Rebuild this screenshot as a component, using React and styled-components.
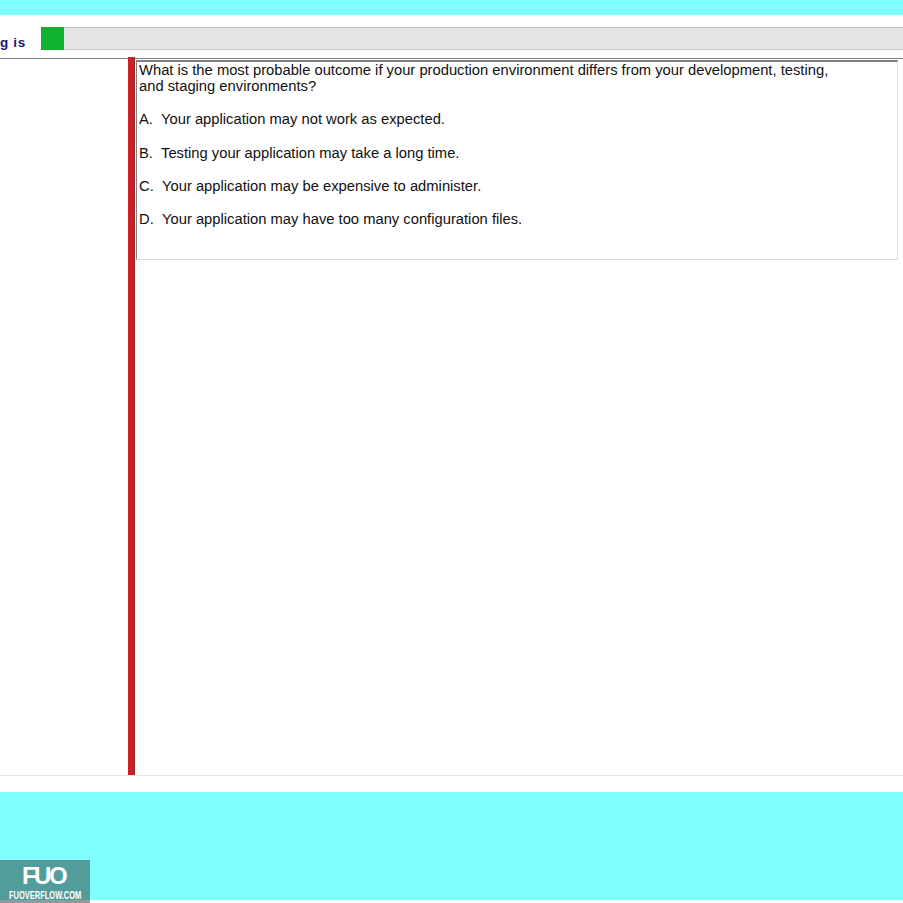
import React from 'react';
import styled, { createGlobalStyle } from 'styled-components';

const Global = createGlobalStyle`
    html, body {
        margin: 0;
        padding: 0;
        background: #fff;
    }
    body {
        font-family: "Liberation Sans", Arial, sans-serif;
    }
`

const Page = styled.div`
    position: relative;
    width: 903px;
    height: 903px;
    overflow: hidden;
    display: flex;
    flex-direction: column;
    background: #fff;
`

const CyanBand = styled.div`
    background: #80ffff;
    height: ${props => props.h}px;
    margin-top: ${props => props.top || 0}px;
    flex: none;
`

const ProgressRow = styled.div`
    display: flex;
    height: 23px;
    margin-top: 12px;
    flex: none;
`

const ProgressLabel = styled.div`
    width: 41px;
    flex: none;
    display: flex;
    justify-content: flex-end;
    align-items: center;
    overflow: hidden;
    padding: 8px 15px 0 0;
    box-sizing: border-box;
    font-size: 13.5px;
    font-weight: 700;
    letter-spacing: 0.7px;
    color: #14147a;
    white-space: nowrap;
`

const ProgressTrack = styled.div`
    flex: 1;
    background: #e4e4e4;
    border-top: 1px solid #c4c4c4;
    border-bottom: 1px solid #c4c4c4;
    display: flex;
`

const ProgressFill = styled.div`
    background: #10b030;
    margin: -1px 0;
`

const Main = styled.div`
    margin-top: 8px;
    height: 716px;
    flex: none;
    display: flex;
    border-top: 1px solid #808080;
    border-bottom: 1px solid #e2e2e2;
`

const Sidebar = styled.div`
    width: 128px;
    flex: none;
`

const Divider = styled.div`
    width: 6px;
    margin-top: -2px;
    flex: none;
    background: #cc2026;
    border-right: 1px solid #8a2a2a;
    box-sizing: content-box;
`

const Content = styled.div`
    flex: 1;
    padding: 1px 5px 0 1px;
`

const QuestionBox = styled.div`
    height: 200px;
    box-sizing: border-box;
    border-top: 2px solid #808080;
    border-left: 1px solid #808080;
    border-right: 1px solid #dcdcdc;
    border-bottom: 1px solid #dcdcdc;
    padding: 0 0 0 2px;
    font-size: 14.75px;
    line-height: 16px;
    color: #111;
`

const Question = styled.div`
    width: 705px;
    margin-bottom: 17px;
`

const Option = styled.div`
    display: flex;
    margin-bottom: ${props => props.gap}px;
`

const OptionKey = styled.span`
    width: ${props => props.w}px;
    flex: none;
`

const Watermark = styled.div`
    position: absolute;
    left: 0;
    bottom: 0;
    width: 90px;
    height: 43px;
    box-sizing: border-box;
    background: #529c9c;
    border-bottom: 3px solid #8c9c9c;
    color: #fff;
    display: flex;
    flex-direction: column;
    align-items: center;
`

const WatermarkMark = styled.div`
    font-size: 24px;
    font-weight: 700;
    line-height: 26px;
    margin-top: 3px;
    letter-spacing: -2.5px;
    padding-right: 3px;
`

const WatermarkSite = styled.div`
    font-size: 11px;
    line-height: 12px;
    font-weight: 700;
    transform: scaleX(0.68);
    white-space: nowrap;
`

const options = [
    { key: 'A.', w: 22, gap: 18, text: 'Your application may not work as expected.' },
    { key: 'B.', w: 22, gap: 17, text: 'Testing your application may take a long time.' },
    { key: 'C.', w: 23, gap: 17, text: 'Your application may be expensive to administer.' },
    { key: 'D.', w: 23, gap: 0, text: 'Your application may have too many configuration files.' },
];

export default function App() {
    return (
        <Page>
            <Global />
            <CyanBand h={15} />
            <ProgressRow>
                <ProgressLabel>g is</ProgressLabel>
                <ProgressTrack>
                    <ProgressFill style={{ width: `${(23 / 862) * 100}%` }} />
                </ProgressTrack>
            </ProgressRow>
            <Main>
                <Sidebar />
                <Divider />
                <Content>
                    <QuestionBox>
                        <Question>
                            What is the most probable outcome if your production environment differs from your development, testing, and staging environments?
                        </Question>
                        {options.map(o => (
                            <Option key={o.key} gap={o.gap}>
                                <OptionKey w={o.w}>{o.key}</OptionKey>
                                <span>{o.text}</span>
                            </Option>
                        ))}
                    </QuestionBox>
                </Content>
            </Main>
            <CyanBand h={108} top={16} />
            <Watermark>
                <WatermarkMark>FUO</WatermarkMark>
                <WatermarkSite>FUOVERFLOW.COM</WatermarkSite>
            </Watermark>
        </Page>
    );
}
